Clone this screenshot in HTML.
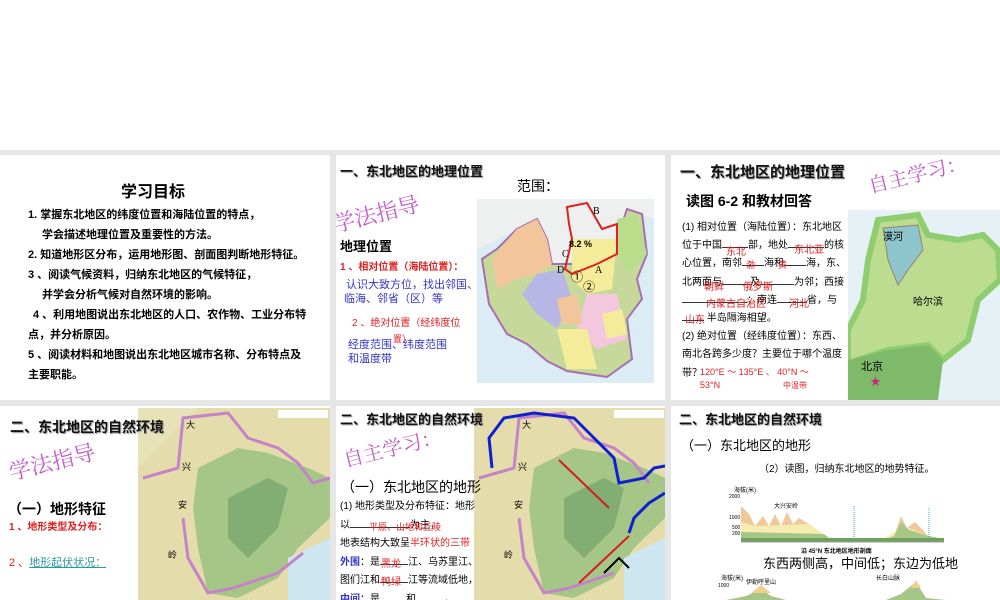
<!DOCTYPE html>
<html><head><meta charset="utf-8">
<style>
*{margin:0;padding:0;box-sizing:border-box}
body{width:1000px;height:600px;overflow:hidden;background:#fff;font-family:"Liberation Sans","Noto Sans CJK SC",sans-serif;position:relative}
.bg{position:absolute;left:0;top:150px;width:1000px;height:450px;background:#e6e6e6}
.p{position:absolute;background:#fff;overflow:hidden}
.t{position:absolute;white-space:nowrap;line-height:1}
.b{font-weight:bold}
.h{font-weight:bold;text-shadow:1px 1px 1px #999;color:#111}
.pur{color:#c45cc8;font-family:"Noto Serif CJK SC","Liberation Serif",serif;transform:rotate(-14deg);transform-origin:left bottom}
.red{color:#e02020}
.blue{color:#3333cc}
.u{display:inline-block;border-bottom:1px solid #333}
</style></head><body>
<div class="bg"></div>

<!-- Panel 1 -->
<div class="p" style="left:0;top:155px;width:330px;height:245px">
<div class="t b" style="left:121px;top:30px;font-size:16px">学习目标</div>
<div class="t b" style="left:28px;top:55px;font-size:11px">1. 掌握东北地区的纬度位置和海陆位置的特点，</div>
<div class="t b" style="left:42px;top:75px;font-size:11px">学会描述地理位置及重要性的方法。</div>
<div class="t b" style="left:28px;top:95px;font-size:11px">2. 知道地形区分布，运用地形图、剖面图判断地形特征。</div>
<div class="t b" style="left:28px;top:115px;font-size:11px">3 、阅读气候资料，归纳东北地区的气候特征，</div>
<div class="t b" style="left:42px;top:135px;font-size:11px">并学会分析气候对自然环境的影响。</div>
<div class="t b" style="left:33px;top:155px;font-size:11px">4 、利用地图说出东北地区的人口、农作物、工业分布特</div>
<div class="t b" style="left:28px;top:175px;font-size:11px">点，并分析原因。</div>
<div class="t b" style="left:28px;top:195px;font-size:11px">5 、阅读材料和地图说出东北地区城市名称、分布特点及</div>
<div class="t b" style="left:28px;top:215px;font-size:11px">主要职能。</div>
</div>

<!-- Panel 2 -->
<div class="p" style="left:336px;top:155px;width:329px;height:245px">
<div class="t h" style="left:4px;top:10px;font-size:13px">一、东北地区的地理位置</div>
<div class="t" style="left:181px;top:24px;font-size:14px">范围：</div>
<svg style="position:absolute;left:141px;top:44px" width="177" height="184" viewBox="0 0 177 184">
<rect width="177" height="184" fill="#dcecf4"/>
<path d="M0 0 L177 0 L177 20 L150 10 L140 40 L100 60 L75 65 L60 30 L40 30 L0 50 Z" fill="#eef0f0"/>
<path d="M40 30 L60 20 L70 40 L75 65 L120 65 L140 40 L150 10 L165 15 L170 55 L160 80 L165 100 L150 120 L155 160 L130 178 L90 172 L70 162 L50 145 L30 135 L12 105 L5 60 L20 50 Z" fill="#c7d99a" stroke="#a66fb0" stroke-width="2"/>
<path d="M15 60 L40 30 L60 20 L70 40 L75 65 L60 75 L40 80 L20 90 Z" fill="#f2c59a"/>
<path d="M60 75 L85 70 L95 100 L80 130 L60 115 L45 95 Z" fill="#b8b6e4"/>
<path d="M95 40 L140 40 L135 90 L110 95 L95 80 Z" fill="#f5ec9a"/>
<path d="M140 20 L160 15 L170 55 L150 75 L140 50 Z" fill="#b8de8c"/>
<path d="M110 95 L140 95 L150 140 L120 150 L100 130 Z" fill="#f3c8de"/>
<path d="M80 130 L110 130 L120 170 L90 170 Z" fill="#f5ec9a"/>
<path d="M80 100 L100 95 L105 125 L85 125 Z" fill="#f2c59a"/>
<path d="M125 115 L145 110 L150 135 L130 140 Z" fill="#f5ec9a"/>
<path d="M90 8 L110 4 L125 30 L140 25 L140 55 L120 65 L95 75 L88 70 L95 40 L92 25 Z" fill="none" stroke="#e02020" stroke-width="2"/>
<text x="116" y="15" font-size="10" font-family="Liberation Serif">B</text>
<text x="92" y="48" font-size="9" font-weight="bold">8.2 %</text>
<text x="85" y="58" font-size="10" font-family="Liberation Serif">C</text>
<text x="80" y="74" font-size="10" font-family="Liberation Serif">D</text>
<text x="118" y="74" font-size="10" font-family="Liberation Serif">A</text>
<text x="94" y="82" font-size="12">①</text>
<text x="106" y="92" font-size="12">②</text>
</svg>
<div class="t pur" style="left:0px;top:58px;font-size:22px">学法指导</div>
<div class="t b" style="left:4px;top:85px;font-size:13px">地理位置</div>
<div class="t red b" style="left:4px;top:108px;font-size:10px">1 、相对位置（海陆位置）：</div>
<div class="t blue" style="left:10px;top:125px;font-size:11px">认识大致方位，找出邻国、</div>
<div class="t blue" style="left:8px;top:139px;font-size:11px">临海、邻省（区）等</div>
<div class="t red" style="left:16px;top:164px;font-size:10px">2 、绝对位置（经纬度位</div>
<div class="t red" style="left:57px;top:180px;font-size:9px">置）</div>
<div class="t blue" style="left:12px;top:185px;font-size:11px">经度范围、纬度范围</div>
<div class="t blue" style="left:12px;top:199px;font-size:11px">和温度带</div>
</div>

<!-- Panel 3 -->
<div class="p" style="left:671px;top:155px;width:329px;height:245px">
<svg style="position:absolute;left:177px;top:55px" width="152" height="190" viewBox="0 0 152 190">
<rect width="152" height="190" fill="#e6f1f5"/>
<path d="M30 10 L70 5 L80 25 L110 30 L135 25 L150 40 L152 70 L130 90 L120 130 L95 150 L80 135 L40 140 L10 150 L0 190 L0 120 L15 90 L20 50 Z" fill="#bcdc90" stroke="#8fcd70" stroke-width="6"/>
<path d="M0 150 L40 140 L80 135 L95 150 L90 190 L0 190 Z" fill="#7fb96a"/>
<path d="M35 18 L70 15 L75 40 L60 60 L50 75 L40 50 Z" fill="#8ec4cc" stroke="#a08070"/>
<text x="35" y="30" font-size="10">漠河</text>
<text x="65" y="95" font-size="10">哈尔滨</text>
<text x="13" y="160" font-size="11">北京</text>
<text x="22" y="175" font-size="11" fill="#c03080">★</text>
</svg>
<div class="t h" style="left:9px;top:10px;font-size:15px">一、东北地区的地理位置</div>
<div class="t pur" style="left:200px;top:20px;font-size:20px">自主学习：</div>
<div class="t b" style="left:15px;top:39px;font-size:14px">读图 6-2 和教材回答</div>
<div style="position:absolute;left:11px;top:64px;font-size:10px;line-height:18.2px;width:175px">
(1) 相对位置（海陆位置）：东北地区<br>
位于中国<span class="u" style="width:26px"></span>部，地处<span class="u" style="width:36px"></span>的核<br>
心位置，南邻<span class="u" style="width:22px"></span>海和<span class="u" style="width:22px"></span>海，东、<br>
北两面与<span class="u" style="width:28px"></span>及<span class="u" style="width:34px"></span>为邻；西接<br>
<span class="u" style="width:65px"></span>；南连<span class="u" style="width:30px"></span>省，与<br>
<span class="u" style="width:22px"></span> 半岛隔海相望。<br>
(2) 绝对位置（经纬度位置）：东西、<br>
南北各跨多少度？主要位于哪个温度<br>
带？</div>
<div class="t red" style="left:55px;top:93px;font-size:10px">东北</div>
<div class="t red" style="left:123px;top:91px;font-size:10px">东北亚</div>
<div class="t red" style="left:75px;top:106px;font-size:9px">渤</div>
<div class="t red" style="left:107px;top:106px;font-size:9px">黄</div>
<div class="t red" style="left:33px;top:128px;font-size:10px">朝鲜</div>
<div class="t red" style="left:72px;top:128px;font-size:10px">俄罗斯</div>
<div class="t red" style="left:35px;top:145px;font-size:10px">内蒙古自治区</div>
<div class="t red" style="left:118px;top:145px;font-size:10px">河北</div>
<div class="t red" style="left:14px;top:161px;font-size:10px">山东</div>
<div class="t red" style="left:29px;top:213px;font-size:9px">120°E ～ 135°E 、 40°N ～</div>
<div class="t red" style="left:29px;top:226px;font-size:9px">53°N</div>
<div class="t red" style="left:112px;top:227px;font-size:8px">中温带</div>
</div>

<!-- Panel 4 -->
<div class="p" style="left:0;top:406px;width:330px;height:194px">
<svg style="position:absolute;left:138px;top:2px" width="192" height="192" viewBox="0 0 192 192">
<rect width="192" height="192" fill="#e4dcaa"/>
<path d="M60 60 L100 40 L130 45 L170 60 L192 70 L192 110 L160 140 L140 170 L100 190 L70 185 L60 140 L55 100 Z" fill="#a6c688"/>
<path d="M90 90 L130 70 L150 80 L140 120 L110 150 L90 130 Z" fill="#82ae74"/>
<path d="M0 0 L60 0 L30 30 L0 60 Z" fill="#e8e2b8"/>
<path d="M150 150 L192 130 L192 192 L150 192 Z" fill="#cde6ef"/>
<path d="M5 70 L40 60 L45 10 L90 5 L110 30 L140 40 L160 55 L175 75 L192 70 M45 110 L50 150 L70 185 L95 180 L140 165 L165 145" fill="none" stroke="#c684c8" stroke-width="3"/>
<rect x="140" y="2" width="50" height="8" fill="#fff"/>
<text x="48" y="20" font-size="9">大</text><text x="44" y="62" font-size="9">兴</text><text x="40" y="100" font-size="9">安</text><text x="30" y="150" font-size="9">岭</text>
</svg>
<div class="t h" style="left:10px;top:14px;font-size:14px">二、东北地区的自然环境</div>
<div class="t pur" style="left:12px;top:55px;font-size:22px">学法指导</div>
<div class="t b" style="left:8px;top:96px;font-size:14px">（一）地形特征</div>
<div class="t red b" style="left:9px;top:117px;font-size:10px">1 、地形类型及分布：</div>
<div class="t" style="left:9px;top:152px;font-size:11px;color:#2a9a9a"><span style="color:#e02020">2 、</span><span style="text-decoration:underline">地形起伏状况：</span></div>
</div>

<!-- Panel 5 -->
<div class="p" style="left:336px;top:406px;width:329px;height:194px">
<svg style="position:absolute;left:138px;top:2px" width="191" height="192" viewBox="0 0 191 192">
<rect width="191" height="192" fill="#e4dcaa"/>
<path d="M60 60 L100 40 L130 45 L170 60 L191 70 L191 110 L160 140 L140 170 L100 190 L70 185 L60 140 L55 100 Z" fill="#a6c688"/>
<path d="M90 90 L130 70 L150 80 L140 120 L110 150 L90 130 Z" fill="#82ae74"/>
<path d="M150 150 L191 130 L191 192 L150 192 Z" fill="#cde6ef"/>
<path d="M5 70 L40 60 L45 10 L90 5 L110 30 L140 40 L160 55 L175 75 M45 110 L50 150 L70 185 L95 180 L140 165" fill="none" stroke="#c684c8" stroke-width="3"/>
<path d="M18 60 L15 30 L30 10 L60 5 L100 10 L120 30 L140 50 L145 75 L170 70 L180 60 L191 58 M191 85 L175 95 L160 110 L155 125" fill="none" stroke="#1020d0" stroke-width="3"/>
<path d="M85 52 L135 100 M105 175 L155 128" stroke="#d02020" stroke-width="2"/>
<path d="M130 165 L145 150 L155 160" fill="none" stroke="#000" stroke-width="2"/>
<rect x="140" y="2" width="50" height="8" fill="#fff"/>
<text x="48" y="20" font-size="9">大</text><text x="44" y="62" font-size="9">兴</text><text x="40" y="100" font-size="9">安</text><text x="30" y="150" font-size="9">岭</text>
</svg>
<div class="t h" style="left:4px;top:7px;font-size:13px">二、东北地区的自然环境</div>
<div class="t pur" style="left:10px;top:43px;font-size:20px">自主学习：</div>
<div class="t" style="left:5px;top:74px;font-size:14px">（一）东北地区的地形</div>
<div style="position:absolute;left:4px;top:92px;font-size:10px;line-height:18.5px;width:140px">
(1) 地形类型及分布特征：地形<br>
以<span class="u" style="width:60px"></span>为主，<br>
地表结构大致呈<span class="red">半环状的三带</span><br>
<span class="blue b">外围</span>：是<span class="u" style="width:28px"></span>江、乌苏里江、<br>
图们江和<span class="u" style="width:28px"></span>江等流域低地，<br>
<span class="blue b">中间</span>：是<span class="u" style="width:26px"></span>和<span class="u" style="width:28px"></span>，</div>
<div class="t red" style="left:33px;top:117px;font-size:9px">平原、山地和丘陵</div>
<div class="t red" style="left:45px;top:154px;font-size:10px">黑龙</div>
<div class="t red" style="left:45px;top:172px;font-size:10px">鸭绿</div>
</div>

<!-- Panel 6 -->
<div class="p" style="left:671px;top:406px;width:329px;height:194px">
<div class="t h" style="left:8px;top:7px;font-size:13px">二、东北地区的自然环境</div>
<div class="t" style="left:10px;top:33px;font-size:13px">（一）东北地区的地形</div>
<div class="t" style="left:88px;top:59px;font-size:10px">（2）读图，归纳东北地区的地势特征。</div>
<svg style="position:absolute;left:58px;top:80px" width="215" height="60" viewBox="0 0 215 60">
<text x="5" y="6" font-size="6">海拔(米)</text>
<text x="0" y="12" font-size="5">2000</text><text x="0" y="33" font-size="5">1000</text><text x="3" y="43" font-size="5">500</text><text x="3" y="49" font-size="5">200</text>
<path d="M12 20 L20 28 L26 40 L34 30 L40 40 L46 28 L52 40 L58 26 L64 38 L70 32 L80 38 L100 52 L150 56 L165 50 L172 30 L178 42 L186 36 L194 44 L200 52 L210 55 L215 53 L215 56 L12 56 Z" fill="#f0c89a"/>
<path d="M12 36 L26 40 L80 38 L100 52 L150 56 L165 46 L180 42 L200 50 L215 53 L215 56 L12 56 Z" fill="#f5ecb0"/>
<path d="M12 46 L95 48 L100 52 L150 56 L165 50 L172 36 L180 44 L200 50 L215 53 L215 56 L12 56 Z" fill="#a6c688"/>
<path d="M12 52 L215 52 L215 56 L12 56 Z" fill="#6ea25a"/>
<line x1="12" y1="56" x2="215" y2="56" stroke="#999"/>
<text x="45" y="22" font-size="6">大兴安岭</text>
<line x1="125" y1="20" x2="125" y2="56" stroke="#4aa0d0" stroke-dasharray="1,1"/>
<line x1="200" y1="22" x2="200" y2="56" stroke="#4aa0d0" stroke-dasharray="1,1"/>
</svg>
<div class="t b" style="left:130px;top:143px;font-size:6px">沿 45°N 东北地区地形剖面</div>
<div class="t" style="left:92px;top:151px;font-size:13px">东西两侧高，中间低；东边为低地</div>
<svg style="position:absolute;left:45px;top:168px" width="230" height="26" viewBox="0 0 230 26">
<text x="5" y="6" font-size="6">海拔(米)</text><text x="2" y="13" font-size="5">1000</text>
<path d="M10 26 L30 22 L45 15 L55 22 L70 26 L170 26 L185 20 L200 8 L210 24 L230 26 Z" fill="#a6c688"/>
<path d="M35 19 L45 11 L55 19 Z M195 14 L200 6 L205 14 Z" fill="#f0d090"/>
<text x="30" y="10" font-size="6">伊勒呼里山</text><text x="160" y="6" font-size="6">长白山脉</text>
</svg>
</div>
</body></html>
